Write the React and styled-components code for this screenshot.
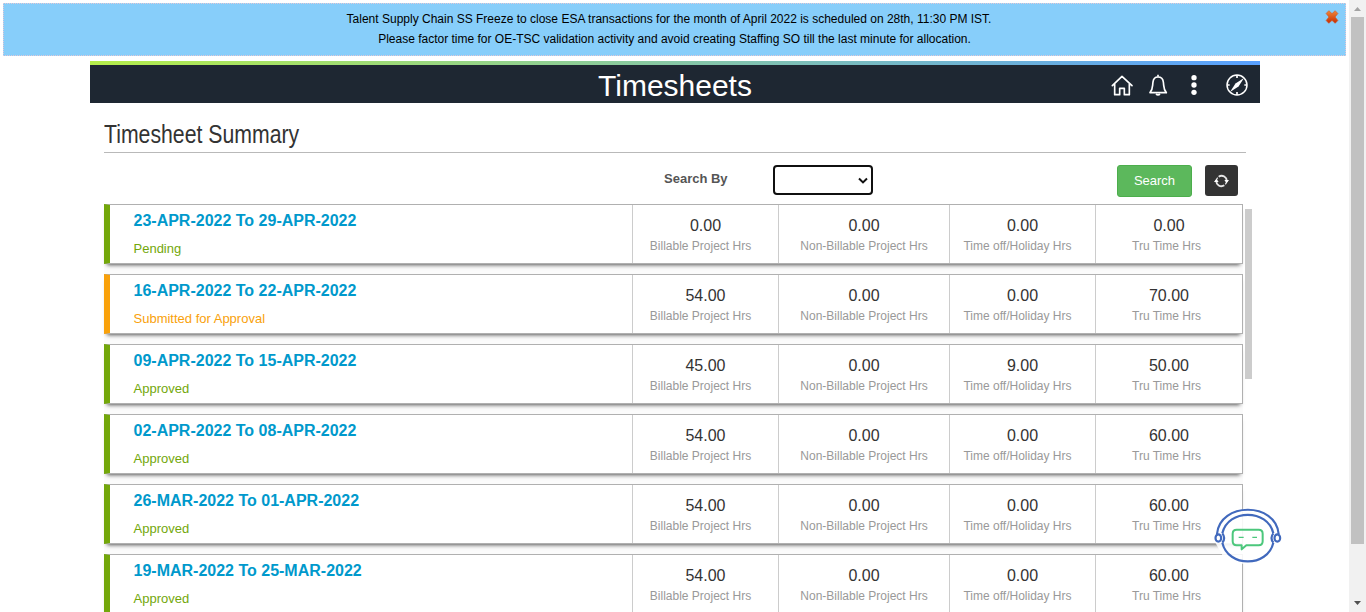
import React from "react";
import styled, { createGlobalStyle } from "styled-components";

const Global = createGlobalStyle`
  * { box-sizing: border-box; }
  html, body { margin: 0; height: 100%; overflow: hidden; background: #fff; }
  body { font-family: "Liberation Sans", Arial, sans-serif; color: #333; }
`;

const Screen = styled.div`
  display: flex;
  width: 1366px;
  height: 612px;
  overflow: hidden;
`;

const Page = styled.div`
  width: 1349px;
  padding: 3px 3px 0;
  height: 612px;
  overflow: hidden;
`;

const Banner = styled.section`
  display: flex;
  height: 53px;
  background: #87cefa;
  border: 1px dotted #e3c9d6;
  color: #000;
  font-size: 12px;
  line-height: 20px;
  text-align: center;
`;

const BannerText = styled.div`
  flex: 1;
  padding: 5px 0 0 9px;
  white-space: nowrap;
`;

const BannerLine = styled.div`
  padding-left: ${(p) => p.$indent || 0}px;
`;

const CloseButton = styled.button`
  width: 20px;
  height: 26px;
  padding: 0;
  border: 0;
  background: none;
  text-align: left;
  line-height: 0;
`;

const Portal = styled.main`
  width: 1170px;
  margin: 5px 0 0 87px;
`;

const Header = styled.header`
  display: grid;
  grid-template-columns: 1fr auto 1fr;
  align-items: center;
  height: 38px;
  background: #1e2732;
`;

const GradientBar = styled.div`
  height: 4px;
  background: linear-gradient(90deg, #b5ee4b, #58a0ff);
`;

const HeaderTitle = styled.h1`
  grid-column: 2;
  margin: 4px 0 0;
  font-size: 30px;
  line-height: 34px;
  font-weight: 400;
  color: #fff;
`;

const HeaderIcons = styled.nav`
  display: flex;
  justify-content: flex-end;
  align-items: center;
  padding: 0 11px 0 0;
`;

const HeaderIcon = styled.svg`
  width: ${(p) => p.$w}px;
  height: 24px;
  margin-left: ${(p) => p.$gap || 0}px;
  margin-top: 1px;
  fill: none;
  stroke: #fff;
  stroke-width: 5;
`;

const Content = styled.div`
  padding: 0 14px;
`;

const PageTitle = styled.h2`
  height: 50px;
  margin: 0;
  padding-top: 15px;
  border-bottom: 1px solid #b9b9b9;
  font-size: 26px;
  line-height: 32px;
  font-weight: 400;
  color: #333;
`;

const Condensed = styled.span`
  display: inline-block;
  transform: scaleX(${(p) => p.$scale});
  transform-origin: left;
`;

const SearchBar = styled.form`
  display: flex;
  align-items: flex-start;
  height: 51px;
  padding: 12px 8px 0 560px;
`;

const SearchLabel = styled.label`
  width: 109px;
  font-size: 13px;
  line-height: 27px;
  font-weight: 700;
  color: #555;
`;

const SelectBox = styled.div`
  display: flex;
  align-items: center;
  justify-content: flex-end;
  width: 100px;
  height: 30px;
  padding-right: 3px;
  border: 2px solid #101010;
  border-radius: 4px;
  background: #fff;
`;

const SearchButton = styled.button`
  width: 75px;
  height: 32px;
  margin-left: auto;
  padding: 0 0 2px;
  border: 1px solid #4cae4c;
  border-radius: 3px;
  background: #5cb85c;
  color: #fff;
  font: 13px "Liberation Sans", Arial, sans-serif;
`;

const RefreshButton = styled.button`
  display: flex;
  align-items: center;
  justify-content: center;
  width: 33px;
  height: 31px;
  margin-left: 13px;
  padding: 0;
  border: 0;
  border-radius: 3px;
  background: #333;
`;

const ListArea = styled.div`
  display: flex;
  width: 1148px;
`;

const List = styled.div`
  display: flex;
  flex-direction: column;
  gap: 10px;
  width: 1139px;
  background: #fbfbfb;
`;

const ListScroll = styled.div`
  width: 7px;
  height: 170px;
  margin: 5px 0 0 2px;
  background: #ccc;
`;

const Row = styled.article`
  display: grid;
  grid-template-columns: 522px 146px 171px 146px 1fr;
  height: 60px;
  border: 1px solid #b0b0b0;
  border-left: 6px solid ${(p) => p.$accent};
  background: #fff;
  box-shadow: 0 4px 4px -3px #555;
`;

const Period = styled.div`
  padding: 6px 0 0 23.5px;
`;

const PeriodDates = styled.div`
  font-size: 16px;
  line-height: 20px;
  font-weight: 700;
  color: #0099cc;
`;

const Status = styled.div`
  margin-top: 9px;
  font-size: 13px;
  line-height: 18px;
  color: ${(p) => p.$color};
`;

const Cell = styled.div`
  padding-top: 11px;
  border-left: 1px solid #ccc;
  text-align: center;
`;

const Hours = styled.div`
  font-size: 16px;
  line-height: 20px;
  color: #333;
`;

const HoursLabel = styled.div`
  padding-right: ${(p) => p.$shift}px;
  font-size: 12px;
  line-height: 20px;
  color: #999;
  white-space: nowrap;
`;

const ScrollTrack = styled.aside`
  display: flex;
  flex-direction: column;
  align-items: center;
  justify-content: space-between;
  width: 17px;
  height: 612px;
  background: #f1f1f1;
`;

const ScrollThumb = styled.div`
  width: 13px;
  height: 527px;
  margin-bottom: auto;
  background: #c1c1c1;
`;

const ScrollArrow = styled.svg`
  width: 17px;
  height: 17px;
  fill: ${(p) => p.$color};
`;

const ChatBot = styled.svg`
  position: fixed;
  left: 1213px;
  top: 507px;
  width: 70px;
  height: 57px;
  fill: none;
`;

const GREEN = "#73a70a";
const ORANGE = "#f9a10a";

const COLUMNS = [
  { label: "Billable Project Hrs", shift: 10 },
  { label: "Non-Billable Project Hrs", shift: 0 },
  { label: "Time off/Holiday Hrs", shift: 10 },
  { label: "Tru Time Hrs", shift: 5 },
];

const ROWS = [
  { dates: "23-APR-2022 To 29-APR-2022", status: "Pending", hours: ["0.00", "0.00", "0.00", "0.00"] },
  { dates: "16-APR-2022 To 22-APR-2022", status: "Submitted for Approval", hours: ["54.00", "0.00", "0.00", "70.00"] },
  { dates: "09-APR-2022 To 15-APR-2022", status: "Approved", hours: ["45.00", "0.00", "9.00", "50.00"] },
  { dates: "02-APR-2022 To 08-APR-2022", status: "Approved", hours: ["54.00", "0.00", "0.00", "60.00"] },
  { dates: "26-MAR-2022 To 01-APR-2022", status: "Approved", hours: ["54.00", "0.00", "0.00", "60.00"] },
  { dates: "19-MAR-2022 To 25-MAR-2022", status: "Approved", hours: ["54.00", "0.00", "0.00", "60.00"] },
];

function TimesheetRow({ dates, status, hours }) {
  const submitted = status === "Submitted for Approval";
  return (
    <Row $accent={submitted ? ORANGE : GREEN}>
      <Period>
        <PeriodDates>{dates}</PeriodDates>
        <Status $color={submitted ? ORANGE : GREEN}>{status}</Status>
      </Period>
      {COLUMNS.map((c, i) => (
        <Cell key={c.label}>
          <Hours>{hours[i]}</Hours>
          <HoursLabel $shift={c.shift}>{c.label}</HoursLabel>
        </Cell>
      ))}
    </Row>
  );
}

export default function App() {
  return (
    <>
      <Global />
      <Screen>
        <Page>
          <Banner>
            <BannerText>
              <BannerLine>Talent Supply Chain SS Freeze to close ESA transactions for the month of April 2022 is scheduled on 28th, 11:30 PM IST.</BannerLine>
              <BannerLine $indent={11}>Please factor time for OE-TSC validation activity and avoid creating Staffing SO till the last minute for allocation.</BannerLine>
            </BannerText>
            <CloseButton aria-label="Close">
              <svg width="14" height="14" viewBox="0 0 13 14">
                <defs>
                  <linearGradient id="close" x1="0" y1="0" x2="0" y2="1">
                    <stop offset="0" stopColor="#f0883a" />
                    <stop offset="1" stopColor="#c62b00" />
                  </linearGradient>
                </defs>
                <path d="M3.3.7 6.5 3.6 9.7.7l2.7 2.8L9.6 7l2.8 3.5-2.7 2.8-3.2-2.9-3.2 2.900L.6 10.500 3.400 7 .6 3.500Z" fill="url(#close)" stroke="#d0562a" strokeWidth=".6" strokeLinejoin="round" />
              </svg>
            </CloseButton>
          </Banner>
          <Portal>
            <GradientBar />
            <Header>
              <HeaderTitle>Timesheets</HeaderTitle>
              <HeaderIcons>
                <HeaderIcon $w={24} viewBox="72 219 72 72" strokeLinejoin="round" strokeLinecap="round">
                  <path d="M79 257 108 229 138 257M86 253V284H101V265H115V284H130V253" />
                </HeaderIcon>
                <HeaderIcon $w={24} $gap={12} viewBox="180 219 72 72" strokeLinejoin="round">
                  <path d="M192 278H241C232 268 234 260 232 246C231 236 225 231 216 231S202 236 201 246C199 260 201 268 192 278Z" />
                  <path d="M216 224V230M210 282Q216 287 222 282" />
                </HeaderIcon>
                <HeaderIcon $w={24} $gap={12} viewBox="288 219 72 72">
                  <g fill="#fff" stroke="none">
                    <circle cx="324" cy="233" r="8" />
                    <circle cx="324" cy="255" r="8" />
                    <circle cx="324" cy="277" r="8" />
                  </g>
                </HeaderIcon>
                <HeaderIcon $w={24} $gap={19} viewBox="417 219 72 72">
                  <circle cx="453" cy="255" r="30" strokeWidth="4.500" />
                  <path d="M453 225V234M453 276V285M423 255H431M475 255H483" strokeWidth="5" />
                  <path d="M474 234 457.500 259.500 432 276 448.500 250.500Z" fill="#fff" stroke="none" />
                </HeaderIcon>
              </HeaderIcons>
            </Header>
            <Content>
              <PageTitle>
                <Condensed $scale={0.817}>Timesheet Summary</Condensed>
              </PageTitle>
              <SearchBar onSubmit={(e) => e.preventDefault()}>
                <SearchLabel>Search By</SearchLabel>
                <SelectBox role="combobox" aria-label="Search By">
                  <svg width="10" height="7" viewBox="0 0 10 7" fill="none" stroke="#101010" strokeWidth="2">
                    <path d="M1 1.500 5 5.400 9 1.500" />
                  </svg>
                </SelectBox>
                <SearchButton>Search</SearchButton>
                <RefreshButton aria-label="Refresh">
                  <svg width="15" height="14" viewBox="0 0 45 42" fill="none" stroke="#e6e6e6" strokeWidth="5.500">
                    <path d="M14 8A15.500 15.500 0 0 1 38 23" />
                    <path d="M31 34A15.500 15.500 0 0 1 7 19" />
                    <path d="M7 21A15.500 15.500 0 0 1 11 11M38 21A15.500 15.500 0 0 1 34 31" strokeWidth="4" />
                    <path d="M0 24 7 14 14 24ZM45 18 38 28 31 18Z" fill="#fff" stroke="none" />
                  </svg>
                </RefreshButton>
              </SearchBar>
              <ListArea>
                <List>
                  {ROWS.map((r) => (
                    <TimesheetRow key={r.dates} {...r} />
                  ))}
                </List>
                <ListScroll />
              </ListArea>
            </Content>
          </Portal>
        </Page>
        <ScrollTrack>
          <ScrollArrow $color="#a3a3a3" viewBox="0 0 17 17"><path d="M5 11 8.500 7 12 11Z" /></ScrollArrow>
          <ScrollThumb />
          <ScrollArrow $color="#505050" viewBox="0 0 17 17"><path d="M5 6 8.500 10 12 6Z" /></ScrollArrow>
        </ScrollTrack>
      </Screen>
      <ChatBot viewBox="99 81 210 171">
        <path d="M105 174C106 60 301 60 302 174L283 190C280 265 128 265 126 223L107 190Z" fill="#fff" fillOpacity=".88" />
        <g stroke="#4169bd" strokeWidth="6.500">
          <path d="M111 162C119 65 288 65 296 162" />
          <path d="M127 160C144 86 263 86 280 160M127 188C144 263 263 263 280 188" />
          <path d="M127 160Q138 174 127 188M280 160Q269 174 280 188" />
          <ellipse cx="115" cy="174" rx="8.500" ry="11" fill="#fff" />
          <ellipse cx="292" cy="174" rx="8.500" ry="11" fill="#fff" />
        </g>
        <g stroke="#4cc77c" strokeWidth="6" strokeLinejoin="round">
          <path d="M170 149H236Q248 149 248 161V184Q248 196 236 196H199L185 208V196H170Q158 196 158 184V161Q158 149 170 149Z" />
          <path d="M176 172H191M217 172H231" strokeWidth="4" />
        </g>
      </ChatBot>
    </>
  );
}
